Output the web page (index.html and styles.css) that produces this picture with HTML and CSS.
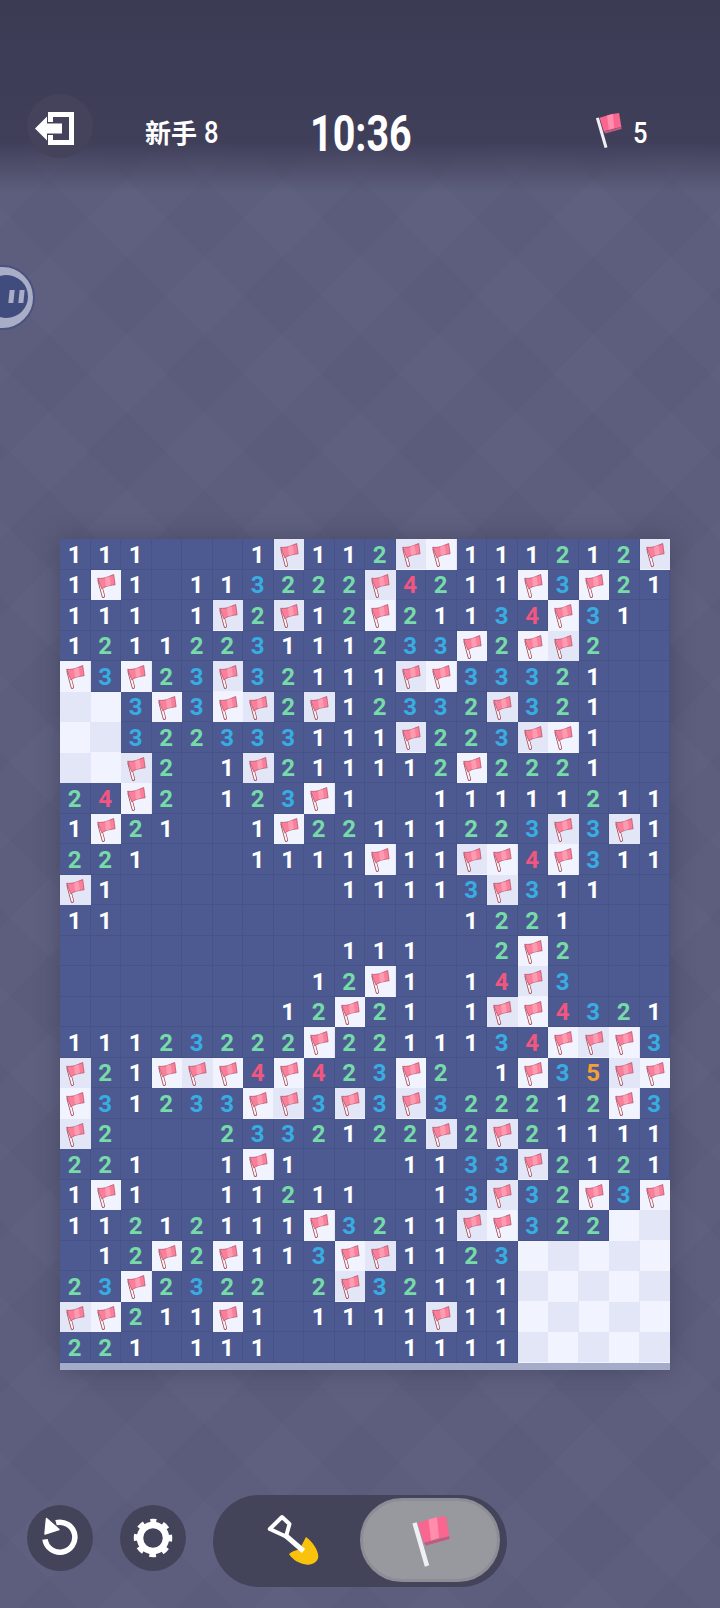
FILE: index.html
```html
<!DOCTYPE html>
<html lang="zh">
<head>
<meta charset="utf-8">
<title>Minesweeper</title>
<link rel="stylesheet" href="styles.css">
</head>
<body>
<svg class="defs" width="0" height="0" aria-hidden="true">
  <symbol id="f" viewBox="0 0 30.5 30.5">
    <path d="M12.400 26.200 8.200 10.600" stroke="#a04a5c" stroke-width="3.400" stroke-linecap="round" fill="none"/>
    <path d="M12.400 26 8.300 10.800" stroke="#fff4f2" stroke-width="1.900" stroke-linecap="round" fill="none"/>
    <path d="M6.600 8.300C10.600 8.700 14 8 17 6.800 19 6 21 5.200 22.700 4.500 23.100 7.800 23.600 11 24.100 14.800 20.600 15.200 17 15.800 14.600 16.800 13 17.400 11.900 18 10.900 18.900Z" fill="#fb7f9b" stroke="#ad4b60" stroke-width=".7" stroke-linejoin="round"/>
    <path d="M14 8 18.500 6.200 20 15.100 15 16.400Z" fill="#fd9bb1"/>
  </symbol>
  <symbol id="big" viewBox="0 0 45 55">
    <path d="M12.700 29.700 38.300 23 38.600 26 15 32.500Z" fill="#c25a80"/>
    <path d="M6.700 9.700 23.300 4.700 35 3 38.300 23 23.300 26.300 12.700 29.700Z" fill="#f9668f"/>
    <path d="M17.500 6.400 26 4.300 28 24.800 20 27.400Z" fill="#ff8dab"/>
    <path d="M3.500 9.800 16 53" stroke="#f0f0f4" stroke-width="4.500" fill="none"/>
  </symbol>
</svg>
<main class="app">
  <header class="top">
    <button class="round exit" type="button" aria-label="exit">
      <svg class="exit-ico" viewBox="0 0 66 63"><path d="M23.500 27V19.500H44.500V47.500H23.500V40" fill="none" stroke="#fff" stroke-width="5"/><path d="M8 33.500 20 21.500V28.500H35V38.500H20V45.500Z" fill="#fff"/></svg>
    </button>
    <div class="level"><span class="cjk">新手</span><span class="level-num">8</span></div>
    <div class="timer">10:36</div>
    <svg class="count-flag"><use href="#big"/></svg>
    <div class="count">5</div>
  </header>

  <section class="board">
    <div class="grid">
<span class="c n1">1</span><span class="c n1">1</span><span class="c n1">1</span><span class="c"></span><span class="c"></span><span class="c"></span><span class="c n1">1</span><span class="fl"><svg><use href="#f"/></svg></span><span class="c n1">1</span><span class="c n1">1</span><span class="c n2">2</span><span class="fl"><svg><use href="#f"/></svg></span><span class="fl"><svg><use href="#f"/></svg></span><span class="c n1">1</span><span class="c n1">1</span><span class="c n1">1</span><span class="c n2">2</span><span class="c n1">1</span><span class="c n2">2</span><span class="fl"><svg><use href="#f"/></svg></span>
<span class="c n1">1</span><span class="fl"><svg><use href="#f"/></svg></span><span class="c n1">1</span><span class="c"></span><span class="c n1">1</span><span class="c n1">1</span><span class="c n3">3</span><span class="c n2">2</span><span class="c n2">2</span><span class="c n2">2</span><span class="fl"><svg><use href="#f"/></svg></span><span class="c n4">4</span><span class="c n2">2</span><span class="c n1">1</span><span class="c n1">1</span><span class="fl"><svg><use href="#f"/></svg></span><span class="c n3">3</span><span class="fl"><svg><use href="#f"/></svg></span><span class="c n2">2</span><span class="c n1">1</span>
<span class="c n1">1</span><span class="c n1">1</span><span class="c n1">1</span><span class="c"></span><span class="c n1">1</span><span class="fl"><svg><use href="#f"/></svg></span><span class="c n2">2</span><span class="fl"><svg><use href="#f"/></svg></span><span class="c n1">1</span><span class="c n2">2</span><span class="fl"><svg><use href="#f"/></svg></span><span class="c n2">2</span><span class="c n1">1</span><span class="c n1">1</span><span class="c n3">3</span><span class="c n4">4</span><span class="fl"><svg><use href="#f"/></svg></span><span class="c n3">3</span><span class="c n1">1</span><span class="c"></span>
<span class="c n1">1</span><span class="c n2">2</span><span class="c n1">1</span><span class="c n1">1</span><span class="c n2">2</span><span class="c n2">2</span><span class="c n3">3</span><span class="c n1">1</span><span class="c n1">1</span><span class="c n1">1</span><span class="c n2">2</span><span class="c n3">3</span><span class="c n3">3</span><span class="fl"><svg><use href="#f"/></svg></span><span class="c n2">2</span><span class="fl"><svg><use href="#f"/></svg></span><span class="fl"><svg><use href="#f"/></svg></span><span class="c n2">2</span><span class="c"></span><span class="c"></span>
<span class="fl"><svg><use href="#f"/></svg></span><span class="c n3">3</span><span class="fl"><svg><use href="#f"/></svg></span><span class="c n2">2</span><span class="c n3">3</span><span class="fl"><svg><use href="#f"/></svg></span><span class="c n3">3</span><span class="c n2">2</span><span class="c n1">1</span><span class="c n1">1</span><span class="c n1">1</span><span class="fl"><svg><use href="#f"/></svg></span><span class="fl"><svg><use href="#f"/></svg></span><span class="c n3">3</span><span class="c n3">3</span><span class="c n3">3</span><span class="c n2">2</span><span class="c n1">1</span><span class="c"></span><span class="c"></span>
<span class="fl"></span><span class="fl"></span><span class="c n3">3</span><span class="fl"><svg><use href="#f"/></svg></span><span class="c n3">3</span><span class="fl"><svg><use href="#f"/></svg></span><span class="fl"><svg><use href="#f"/></svg></span><span class="c n2">2</span><span class="fl"><svg><use href="#f"/></svg></span><span class="c n1">1</span><span class="c n2">2</span><span class="c n3">3</span><span class="c n3">3</span><span class="c n2">2</span><span class="fl"><svg><use href="#f"/></svg></span><span class="c n3">3</span><span class="c n2">2</span><span class="c n1">1</span><span class="c"></span><span class="c"></span>
<span class="fl"></span><span class="fl"></span><span class="c n3">3</span><span class="c n2">2</span><span class="c n2">2</span><span class="c n3">3</span><span class="c n3">3</span><span class="c n3">3</span><span class="c n1">1</span><span class="c n1">1</span><span class="c n1">1</span><span class="fl"><svg><use href="#f"/></svg></span><span class="c n2">2</span><span class="c n2">2</span><span class="c n3">3</span><span class="fl"><svg><use href="#f"/></svg></span><span class="fl"><svg><use href="#f"/></svg></span><span class="c n1">1</span><span class="c"></span><span class="c"></span>
<span class="fl"></span><span class="fl"></span><span class="fl"><svg><use href="#f"/></svg></span><span class="c n2">2</span><span class="c"></span><span class="c n1">1</span><span class="fl"><svg><use href="#f"/></svg></span><span class="c n2">2</span><span class="c n1">1</span><span class="c n1">1</span><span class="c n1">1</span><span class="c n1">1</span><span class="c n2">2</span><span class="fl"><svg><use href="#f"/></svg></span><span class="c n2">2</span><span class="c n2">2</span><span class="c n2">2</span><span class="c n1">1</span><span class="c"></span><span class="c"></span>
<span class="c n2">2</span><span class="c n4">4</span><span class="fl"><svg><use href="#f"/></svg></span><span class="c n2">2</span><span class="c"></span><span class="c n1">1</span><span class="c n2">2</span><span class="c n3">3</span><span class="fl"><svg><use href="#f"/></svg></span><span class="c n1">1</span><span class="c"></span><span class="c"></span><span class="c n1">1</span><span class="c n1">1</span><span class="c n1">1</span><span class="c n1">1</span><span class="c n1">1</span><span class="c n2">2</span><span class="c n1">1</span><span class="c n1">1</span>
<span class="c n1">1</span><span class="fl"><svg><use href="#f"/></svg></span><span class="c n2">2</span><span class="c n1">1</span><span class="c"></span><span class="c"></span><span class="c n1">1</span><span class="fl"><svg><use href="#f"/></svg></span><span class="c n2">2</span><span class="c n2">2</span><span class="c n1">1</span><span class="c n1">1</span><span class="c n1">1</span><span class="c n2">2</span><span class="c n2">2</span><span class="c n3">3</span><span class="fl"><svg><use href="#f"/></svg></span><span class="c n3">3</span><span class="fl"><svg><use href="#f"/></svg></span><span class="c n1">1</span>
<span class="c n2">2</span><span class="c n2">2</span><span class="c n1">1</span><span class="c"></span><span class="c"></span><span class="c"></span><span class="c n1">1</span><span class="c n1">1</span><span class="c n1">1</span><span class="c n1">1</span><span class="fl"><svg><use href="#f"/></svg></span><span class="c n1">1</span><span class="c n1">1</span><span class="fl"><svg><use href="#f"/></svg></span><span class="fl"><svg><use href="#f"/></svg></span><span class="c n4">4</span><span class="fl"><svg><use href="#f"/></svg></span><span class="c n3">3</span><span class="c n1">1</span><span class="c n1">1</span>
<span class="fl"><svg><use href="#f"/></svg></span><span class="c n1">1</span><span class="c"></span><span class="c"></span><span class="c"></span><span class="c"></span><span class="c"></span><span class="c"></span><span class="c"></span><span class="c n1">1</span><span class="c n1">1</span><span class="c n1">1</span><span class="c n1">1</span><span class="c n3">3</span><span class="fl"><svg><use href="#f"/></svg></span><span class="c n3">3</span><span class="c n1">1</span><span class="c n1">1</span><span class="c"></span><span class="c"></span>
<span class="c n1">1</span><span class="c n1">1</span><span class="c"></span><span class="c"></span><span class="c"></span><span class="c"></span><span class="c"></span><span class="c"></span><span class="c"></span><span class="c"></span><span class="c"></span><span class="c"></span><span class="c"></span><span class="c n1">1</span><span class="c n2">2</span><span class="c n2">2</span><span class="c n1">1</span><span class="c"></span><span class="c"></span><span class="c"></span>
<span class="c"></span><span class="c"></span><span class="c"></span><span class="c"></span><span class="c"></span><span class="c"></span><span class="c"></span><span class="c"></span><span class="c"></span><span class="c n1">1</span><span class="c n1">1</span><span class="c n1">1</span><span class="c"></span><span class="c"></span><span class="c n2">2</span><span class="fl"><svg><use href="#f"/></svg></span><span class="c n2">2</span><span class="c"></span><span class="c"></span><span class="c"></span>
<span class="c"></span><span class="c"></span><span class="c"></span><span class="c"></span><span class="c"></span><span class="c"></span><span class="c"></span><span class="c"></span><span class="c n1">1</span><span class="c n2">2</span><span class="fl"><svg><use href="#f"/></svg></span><span class="c n1">1</span><span class="c"></span><span class="c n1">1</span><span class="c n4">4</span><span class="fl"><svg><use href="#f"/></svg></span><span class="c n3">3</span><span class="c"></span><span class="c"></span><span class="c"></span>
<span class="c"></span><span class="c"></span><span class="c"></span><span class="c"></span><span class="c"></span><span class="c"></span><span class="c"></span><span class="c n1">1</span><span class="c n2">2</span><span class="fl"><svg><use href="#f"/></svg></span><span class="c n2">2</span><span class="c n1">1</span><span class="c"></span><span class="c n1">1</span><span class="fl"><svg><use href="#f"/></svg></span><span class="fl"><svg><use href="#f"/></svg></span><span class="c n4">4</span><span class="c n3">3</span><span class="c n2">2</span><span class="c n1">1</span>
<span class="c n1">1</span><span class="c n1">1</span><span class="c n1">1</span><span class="c n2">2</span><span class="c n3">3</span><span class="c n2">2</span><span class="c n2">2</span><span class="c n2">2</span><span class="fl"><svg><use href="#f"/></svg></span><span class="c n2">2</span><span class="c n2">2</span><span class="c n1">1</span><span class="c n1">1</span><span class="c n1">1</span><span class="c n3">3</span><span class="c n4">4</span><span class="fl"><svg><use href="#f"/></svg></span><span class="fl"><svg><use href="#f"/></svg></span><span class="fl"><svg><use href="#f"/></svg></span><span class="c n3">3</span>
<span class="fl"><svg><use href="#f"/></svg></span><span class="c n2">2</span><span class="c n1">1</span><span class="fl"><svg><use href="#f"/></svg></span><span class="fl"><svg><use href="#f"/></svg></span><span class="fl"><svg><use href="#f"/></svg></span><span class="c n4">4</span><span class="fl"><svg><use href="#f"/></svg></span><span class="c n4">4</span><span class="c n2">2</span><span class="c n3">3</span><span class="fl"><svg><use href="#f"/></svg></span><span class="c n2">2</span><span class="c"></span><span class="c n1">1</span><span class="fl"><svg><use href="#f"/></svg></span><span class="c n3">3</span><span class="c n5">5</span><span class="fl"><svg><use href="#f"/></svg></span><span class="fl"><svg><use href="#f"/></svg></span>
<span class="fl"><svg><use href="#f"/></svg></span><span class="c n3">3</span><span class="c n1">1</span><span class="c n2">2</span><span class="c n3">3</span><span class="c n3">3</span><span class="fl"><svg><use href="#f"/></svg></span><span class="fl"><svg><use href="#f"/></svg></span><span class="c n3">3</span><span class="fl"><svg><use href="#f"/></svg></span><span class="c n3">3</span><span class="fl"><svg><use href="#f"/></svg></span><span class="c n3">3</span><span class="c n2">2</span><span class="c n2">2</span><span class="c n2">2</span><span class="c n1">1</span><span class="c n2">2</span><span class="fl"><svg><use href="#f"/></svg></span><span class="c n3">3</span>
<span class="fl"><svg><use href="#f"/></svg></span><span class="c n2">2</span><span class="c"></span><span class="c"></span><span class="c"></span><span class="c n2">2</span><span class="c n3">3</span><span class="c n3">3</span><span class="c n2">2</span><span class="c n1">1</span><span class="c n2">2</span><span class="c n2">2</span><span class="fl"><svg><use href="#f"/></svg></span><span class="c n2">2</span><span class="fl"><svg><use href="#f"/></svg></span><span class="c n2">2</span><span class="c n1">1</span><span class="c n1">1</span><span class="c n1">1</span><span class="c n1">1</span>
<span class="c n2">2</span><span class="c n2">2</span><span class="c n1">1</span><span class="c"></span><span class="c"></span><span class="c n1">1</span><span class="fl"><svg><use href="#f"/></svg></span><span class="c n1">1</span><span class="c"></span><span class="c"></span><span class="c"></span><span class="c n1">1</span><span class="c n1">1</span><span class="c n3">3</span><span class="c n3">3</span><span class="fl"><svg><use href="#f"/></svg></span><span class="c n2">2</span><span class="c n1">1</span><span class="c n2">2</span><span class="c n1">1</span>
<span class="c n1">1</span><span class="fl"><svg><use href="#f"/></svg></span><span class="c n1">1</span><span class="c"></span><span class="c"></span><span class="c n1">1</span><span class="c n1">1</span><span class="c n2">2</span><span class="c n1">1</span><span class="c n1">1</span><span class="c"></span><span class="c"></span><span class="c n1">1</span><span class="c n3">3</span><span class="fl"><svg><use href="#f"/></svg></span><span class="c n3">3</span><span class="c n2">2</span><span class="fl"><svg><use href="#f"/></svg></span><span class="c n3">3</span><span class="fl"><svg><use href="#f"/></svg></span>
<span class="c n1">1</span><span class="c n1">1</span><span class="c n2">2</span><span class="c n1">1</span><span class="c n2">2</span><span class="c n1">1</span><span class="c n1">1</span><span class="c n1">1</span><span class="fl"><svg><use href="#f"/></svg></span><span class="c n3">3</span><span class="c n2">2</span><span class="c n1">1</span><span class="c n1">1</span><span class="fl"><svg><use href="#f"/></svg></span><span class="fl"><svg><use href="#f"/></svg></span><span class="c n3">3</span><span class="c n2">2</span><span class="c n2">2</span><span class="fl"></span><span class="fl"></span>
<span class="c"></span><span class="c n1">1</span><span class="c n2">2</span><span class="fl"><svg><use href="#f"/></svg></span><span class="c n2">2</span><span class="fl"><svg><use href="#f"/></svg></span><span class="c n1">1</span><span class="c n1">1</span><span class="c n3">3</span><span class="fl"><svg><use href="#f"/></svg></span><span class="fl"><svg><use href="#f"/></svg></span><span class="c n1">1</span><span class="c n1">1</span><span class="c n2">2</span><span class="c n3">3</span><span class="fl"></span><span class="fl"></span><span class="fl"></span><span class="fl"></span><span class="fl"></span>
<span class="c n2">2</span><span class="c n3">3</span><span class="fl"><svg><use href="#f"/></svg></span><span class="c n2">2</span><span class="c n3">3</span><span class="c n2">2</span><span class="c n2">2</span><span class="c"></span><span class="c n2">2</span><span class="fl"><svg><use href="#f"/></svg></span><span class="c n3">3</span><span class="c n2">2</span><span class="c n1">1</span><span class="c n1">1</span><span class="c n1">1</span><span class="fl"></span><span class="fl"></span><span class="fl"></span><span class="fl"></span><span class="fl"></span>
<span class="fl"><svg><use href="#f"/></svg></span><span class="fl"><svg><use href="#f"/></svg></span><span class="c n2">2</span><span class="c n1">1</span><span class="c n1">1</span><span class="fl"><svg><use href="#f"/></svg></span><span class="c n1">1</span><span class="c"></span><span class="c n1">1</span><span class="c n1">1</span><span class="c n1">1</span><span class="c n1">1</span><span class="fl"><svg><use href="#f"/></svg></span><span class="c n1">1</span><span class="c n1">1</span><span class="fl"></span><span class="fl"></span><span class="fl"></span><span class="fl"></span><span class="fl"></span>
<span class="c n2">2</span><span class="c n2">2</span><span class="c n1">1</span><span class="c"></span><span class="c n1">1</span><span class="c n1">1</span><span class="c n1">1</span><span class="c"></span><span class="c"></span><span class="c"></span><span class="c"></span><span class="c n1">1</span><span class="c n1">1</span><span class="c n1">1</span><span class="c n1">1</span><span class="fl"></span><span class="fl"></span><span class="fl"></span><span class="fl"></span><span class="fl"></span>
    </div>
  </section>

  <footer class="tools">
    <button class="round" type="button" aria-label="undo">
      <svg class="tool-ico" viewBox="0 0 66 66"><path d="M29 17.700A15 15 0 1 1 18 34.300" fill="none" stroke="#fff" stroke-width="5.500"/><path d="M19.500 13.500 18 29 32 24.500Z" fill="#fff" stroke="#fff" stroke-width="1.500" stroke-linejoin="round"/></svg>
    </button>
    <button class="round" type="button" aria-label="settings">
      <svg class="tool-ico" viewBox="0 0 66 66"><circle cx="33" cy="33" r="13" fill="none" stroke="#fff" stroke-width="6.500"/><circle cx="33" cy="33" r="17" fill="none" stroke="#fff" stroke-width="4.500" stroke-dasharray="6.680 6.670" stroke-dashoffset="3.340" transform="rotate(-90 33 33)"/></svg>
    </button>
    <div class="mode">
      <svg class="shovel" viewBox="0 0 52 53">
        <path d="M39 24C46 29 51 37 51.300 43 51.500 49 45 52.500 39 51.500 32 50.500 26 47 22 41 25 38 29 37.500 31.500 36.500 35 33 36.500 28 39 24Z" fill="#f9c20d"/>
        <path d="M18 22 36.500 38" stroke="#fff" stroke-width="5" fill="none"/>
        <path d="M15 4 2.800 16 19 23.500 22.500 11Z" fill="none" stroke="#fff" stroke-width="4" stroke-linejoin="round"/>
      </svg>
      <div class="mode-on"><svg class="mode-flag"><use href="#big"/></svg></div>
    </div>
  </footer>

  <div class="bubble" aria-hidden="true"><div class="bubble-in"><i></i><i></i></div></div>
</main>
</body>
</html>
```

FILE: styles.css
```css
* { box-sizing: border-box; }
html, body { margin: 0; padding: 0; }
body { width: 720px; height: 1608px; overflow: hidden; background: #5c5d7c; }
.defs { position: absolute; }

.app {
  position: relative;
  width: 720px;
  height: 1608px;
  display: flex;
  flex-direction: column;
  font-family: Roboto, "Noto Sans CJK SC", sans-serif;
  color: #fff;
  background:
    linear-gradient(to bottom, #3c3b54 0, #403f5a 142px, rgba(64, 63, 90, 0) 192px),
    repeating-linear-gradient(45deg, rgba(40, 40, 70, .04) 0 55px, transparent 55px 110px),
    repeating-linear-gradient(-45deg, rgba(40, 40, 70, .04) 0 55px, transparent 55px 110px),
    #5f607f;
}

.round {
  width: 66px;
  height: 66px;
  padding: 0;
  border: 0;
  border-radius: 50%;
  background: #43435a;
  flex: none;
  display: block;
}

.top {
  display: flex;
  align-items: center;
  height: 64px;
  margin-top: 94px;
  padding-left: 27px;
}
.exit { height: 64px; background: #44435b; }
.exit-ico { display: block; width: 66px; height: 63px; }
.level {
  display: flex;
  align-items: center;
  gap: 7px;
  margin-left: 52px;
  margin-top: 12px;
  width: 73px;
  white-space: nowrap;
}
.cjk { font-family: "Noto Sans CJK SC", sans-serif; font-size: 26px; line-height: 32px; font-weight: 700; }
.level-num {
  display: inline-block;
  width: 14px;
  font-size: 32px;
  line-height: 32px;
  font-weight: 500;
  transform: scaleX(.8);
  transform-origin: left center;
}
.timer {
  margin-left: 92px;
  margin-top: 16px;
  width: 100px;
  font-size: 50px;
  line-height: 56px;
  font-weight: 700;
  white-space: nowrap;
  transform: scaleX(.79);
  transform-origin: left center;
}
.count-flag { margin-left: 185px; margin-top: 8px; width: 31px; height: 38px; }
.count {
  margin-left: 7px;
  margin-top: 13px;
  font-size: 30px;
  line-height: 36px;
  font-weight: 500;
  transform: scaleX(.85);
  transform-origin: left center;
}

.board {
  width: 610px;
  margin-top: 381px;
  margin-left: 60px;
  padding-bottom: 7.5px;
  background: #a5acca;
  box-shadow: 0 0 22px rgba(40, 40, 62, .35);
}
.grid {
  display: grid;
  grid-template-columns: repeat(20, 30.5px);
  grid-auto-rows: 30.5px;
  background: repeating-conic-gradient(#e2e6f7 0 25%, #f1f4fe 0 50%) 0 0 / 61px 61px;
}
.c {
  display: flex;
  align-items: center;
  justify-content: center;
  padding-top: 2px;
  background: #4c5a91;
  border-right: 1px solid #465389;
  border-bottom: 1px solid #465389;
  font-size: 24px;
  font-weight: 700;
  line-height: 28px;
}
.n1 { color: #fff; }
.n2 { color: #77dba9; }
.n3 { color: #38ade3; }
.n4 { color: #f0567f; }
.n5 { color: #f4a035; }
.fl { display: block; }
.fl svg { display: block; width: 30.5px; height: 30.5px; }

.tools {
  display: flex;
  align-items: flex-start;
  gap: 27px;
  height: 92px;
  margin-top: 125px;
  padding-left: 27px;
}
.tools .round { margin-top: 10px; }
.tool-ico { display: block; width: 66px; height: 66px; }
.mode {
  width: 294px;
  height: 92px;
  padding: 3px 7px 5px 54px;
  display: flex;
  justify-content: space-between;
  align-items: center;
  border-radius: 46px;
  background: #43435a;
}
.shovel { width: 52px; height: 53px; margin-top: -2px; }
.mode-on {
  width: 140px;
  height: 84px;
  display: flex;
  align-items: center;
  justify-content: center;
  border: 3px solid #8d8d96;
  border-radius: 42px;
  background: #98989f;
}
.mode-flag { width: 45px; height: 55px; margin-left: 7px; margin-top: 1px; }

.bubble {
  position: absolute;
  left: -30px;
  top: 265px;
  width: 65px;
  height: 65px;
  border-radius: 50%;
  background: #a9adc6;
  border: 2px solid #48537f;
}
.bubble-in {
  position: absolute;
  left: 13px;
  top: 8px;
  width: 43px;
  height: 43px;
  border-radius: 50%;
  background: #414c7e;
  display: flex;
  gap: 5px;
  justify-content: center;
  align-items: center;
  padding-left: 19px;
}
.bubble-in i {
  display: block;
  width: 5px;
  height: 13px;
  background: #a9adc6;
  transform: skewX(-6deg);
}
```
